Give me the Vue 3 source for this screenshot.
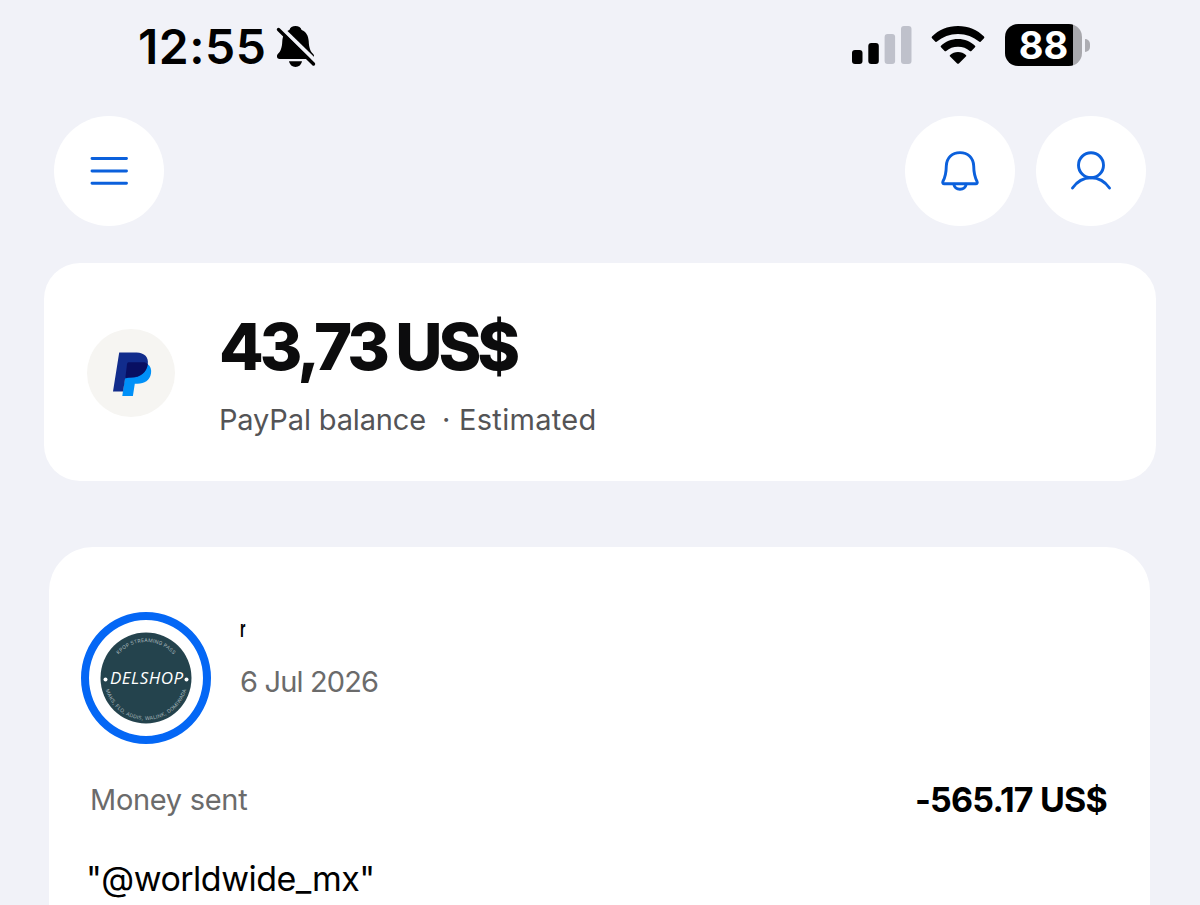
<script setup>
import { ref } from "vue";

const signalBars = [
  { x: 0, height: 14, active: true },
  { x: 16.3, height: 21, active: true },
  { x: 32.6, height: 30, active: false },
  { x: 49, height: 38, active: false },
];

const time = ref("12:55");
const battery = ref(88);

const balance = {
  amount: "43,73 US$",
  label: "PayPal balance",
  note: "Estimated",
};

const payment = {
  name: "r",
  date: "6 Jul 2026",
  type: "Money sent",
  amount: "-565.17 US$",
  message: '"@worldwide_mx"',
};
</script>

<template>
  <div class="screen">
    <div class="status-bar">
      <div class="status-left">
        <span class="time">{{ time }}</span>
        <svg class="silent" width="42" height="44" viewBox="0 0 42 44">
          <path
            d="M20.5 1C17.5 1 15 2.6 14.4 5C9.5 7 7.7 11 7.3 16C7 23 5.5 26.5 2.8 29C1.2 30.8 2 34 4.6 34H36.4C39 34 39.8 30.8 38.2 29C35.5 26.5 34 23 33.7 16C33.3 11 31.5 7 26.6 5C26 2.6 23.5 1 20.5 1Z"
          />
          <path d="M14 36.3H27C26.3 39.8 23.8 42 20.5 42S14.7 39.8 14 36.3Z" />
          <path class="slash-gap" d="M4.5 1L42 37.5" />
          <path class="slash" d="M3.5 4.5L38.5 39" />
        </svg>
      </div>
      <div class="status-right">
        <svg class="signal" width="60" height="38" viewBox="0 0 60 38">
          <rect
            v-for="bar in signalBars"
            :key="bar.x"
            :x="bar.x"
            :y="38 - bar.height"
            width="10.5"
            :height="bar.height"
            rx="3"
            :fill="bar.active ? '#000' : '#bfc1cb'"
          />
        </svg>
        <svg class="wifi" width="54" height="38" viewBox="0 0 54 38">
          <path
            d="M27 0C37.3 0 46.5 4 53 10.5Q53.8 11.4 53 12.3L49.6 15.7Q48.8 16.4 48 15.6C42.5 10.9 35.2 8 27 8S11.5 10.9 6 15.6Q5.2 16.4 4.4 15.7L1 12.3Q.2 11.4 1 10.5C7.5 4 16.7 0 27 0Z"
          />
          <path
            d="M27 13C33.7 13 39.7 15.6 44 19.7Q44.8 20.5 44 21.3L40.4 24.9Q39.6 25.6 38.8 24.9C35.7 22.3 31.6 20.7 27 20.7S18.3 22.3 15.2 24.9Q14.4 25.6 13.6 24.9L10 21.3Q9.2 20.5 10 19.7C14.3 15.6 20.3 13 27 13Z"
          />
          <path
            d="M27 26C30 26 32.8 27.1 34.9 29Q35.7 29.8 34.9 30.6L27.9 37.4Q27 38.2 26.1 37.4L19.1 30.6Q18.3 29.8 19.1 29C21.2 27.1 24 26 27 26Z"
          />
        </svg>
        <div class="battery">
          <div class="battery-body">
            <span>{{ battery }}</span>
          </div>
          <div class="battery-tip"></div>
        </div>
      </div>
    </div>

    <div class="toolbar">
      <button class="round-button" aria-label="Menu">
        <svg width="44" height="44" viewBox="0 0 44 44">
          <path d="M5 9.5H39.5M5 22H39.5M5 34.2H39.5" />
        </svg>
      </button>
      <div class="toolbar-right">
        <button class="round-button" aria-label="Notifications">
          <svg width="44" height="44" viewBox="0 0 44 44">
            <path
              d="M22 3.6C14 3.6 8.6 9 8.3 17C8.2 24.5 7 28.5 5 32.3C4.3 33.7 4.9 34.8 6.3 34.8H37.7C39.1 34.8 39.7 33.7 39 32.3C37 28.5 35.8 24.5 35.7 17C35.4 9 30 3.6 22 3.6Z"
            />
            <path d="M15.8 35.3C16.5 38.7 18.9 40.3 22 40.3S27.5 38.7 28.2 35.3" />
          </svg>
        </button>
        <button class="round-button" aria-label="Profile">
          <svg width="44" height="44" viewBox="0 0 44 44">
            <circle cx="22" cy="16.2" r="12.5" />
            <path d="M3.5 39C8 32.5 14.5 28.7 22 28.7S36 32.5 40.5 39" />
          </svg>
        </button>
      </div>
    </div>

    <div class="card balance-card">
      <div class="paypal-logo">
        <svg width="42" height="48" viewBox="0 0 42 48">
          <path
            fill="#0090f8"
            d="M35.5 13C38.5 15.2 39.7 18.5 39 22.5C37.8 29.5 32.5 32.7 25.5 32.7H22.8L20.9 45H10.3L14.5 15Z"
          />
          <path
            fill="#112c8c"
            d="M7.2 1.500H24.500C32.500 1.500 36.900 6.500 35.800 13C34.600 21.500 28.500 26.700 19 26.700H13.200L11 40.500H1Z"
          />
          <path
            fill="#080f62"
            d="M16.5 11.2H32.5Q34.6 11.6 35.7 13.2C34.5 21.5 28.5 26.2 19.5 26.2Q16.5 26.2 13.3 27.5L15 13Q15.2 11.2 16.5 11.2Z"
          />
        </svg>
      </div>
      <div class="balance-content">
        <h1>{{ balance.amount }}</h1>
        <p>
          <span class="balance-label">{{ balance.label }}</span>
          <span class="dot">·</span>
          <span class="balance-note">{{ balance.note }}</span>
        </p>
      </div>
    </div>

    <div class="card payment-card">
      <div class="payment-header">
        <div class="avatar">
          <svg width="92" height="92" viewBox="0 0 92 92">
            <defs>
              <path id="arc-top" d="M10 46A36 36 0 0 1 82 46" />
              <path id="arc-bottom" d="M4 46A42 42 0 0 0 88 46" />
            </defs>
            <circle cx="46" cy="46" r="45.5" fill="#24434d" />
            <text class="ring-text" text-anchor="middle">
              <textPath href="#arc-top" startOffset="50%" textLength="62">
                KPOP STREAMING PASS
              </textPath>
            </text>
            <text class="ring-text" text-anchor="middle">
              <textPath href="#arc-bottom" startOffset="50%" textLength="108">
                MAKS, FLO, ADDIS, WALINK, DOMIWADA
              </textPath>
            </text>
            <text class="shop-name" x="10" y="52" textLength="73">DELSHOP</text>
            <circle cx="5.5" cy="47.5" r="2" fill="#fff" />
            <circle cx="86.5" cy="47.5" r="2" fill="#fff" />
          </svg>
        </div>
        <div class="payment-who">
          <span class="name">{{ payment.name }}</span>
          <span class="date">{{ payment.date }}</span>
        </div>
      </div>
      <div class="payment-row">
        <span class="type">{{ payment.type }}</span>
        <span class="amount">{{ payment.amount }}</span>
      </div>
      <p class="message">{{ payment.message }}</p>
    </div>
  </div>
</template>

<style>
body {
  margin: 0;
  background-color: #f1f2f8;
}
</style>

<style scoped>
.screen {
  box-sizing: border-box;
  width: 1200px;
  height: 905px;
  overflow: hidden;
  display: flex;
  flex-direction: column;
  background-color: #f1f2f8;
  font-family: Inter, "Liberation Sans", sans-serif;
  color: #000;
}
.status-bar {
  display: flex;
  justify-content: space-between;
  box-sizing: border-box;
  height: 116px;
  padding: 17px 110px 0 138px;
}
.status-left {
  display: flex;
  align-items: flex-start;
  height: 60px;
}
.time {
  width: 137px;
  font-size: 48px;
  font-weight: 600;
  line-height: 60px;
  letter-spacing: 0.5px;
  white-space: nowrap;
}
.silent {
  margin-top: 8px;
}
.slash-gap {
  stroke: #f1f2f8;
  stroke-width: 4;
}
.slash {
  stroke: #000;
  stroke-width: 3.4;
  stroke-linecap: round;
}
.status-right {
  display: flex;
  align-items: flex-start;
}
.signal {
  margin-top: 9px;
}
.wifi {
  margin: 9px 20px 0 19px;
}
.battery {
  display: flex;
  align-items: center;
  gap: 3px;
  margin-top: 7px;
}
.battery-body {
  width: 77px;
  height: 42px;
  border-radius: 13px;
  background: linear-gradient(to right, #000 88%, #a8a8ad 88%);
  color: #fff;
  text-align: center;
}
.battery-body span {
  font-size: 38px;
  font-weight: 700;
  line-height: 42px;
}
.battery-tip {
  width: 5px;
  height: 13px;
  border-radius: 0 6px 6px 0;
  background-color: #adadb3;
}
.toolbar {
  display: flex;
  justify-content: space-between;
  padding: 0 54px;
  height: 147px;
}
.toolbar-right {
  display: flex;
  gap: 21px;
}
.round-button {
  display: flex;
  align-items: center;
  justify-content: center;
  width: 110px;
  height: 110px;
  padding: 0;
  border: none;
  border-radius: 50%;
  background-color: #fff;
}
.round-button svg {
  fill: none;
  stroke: #0b60dc;
  stroke-width: 2.9;
  stroke-linecap: round;
  stroke-linejoin: round;
}
.card {
  box-sizing: border-box;
  background-color: #fff;
}
.balance-card {
  display: flex;
  flex-shrink: 0;
  height: 218px;
  margin: 0 44px;
  padding: 0 43px;
  border-radius: 36px;
}
.paypal-logo {
  display: flex;
  align-items: center;
  justify-content: center;
  box-sizing: border-box;
  width: 88px;
  height: 88px;
  margin-top: 66px;
  padding: 3px 0 0 3px;
  border-radius: 50%;
  background-color: #f6f5f2;
}
.balance-content {
  margin: 44px 0 0 44px;
}
.balance-content h1 {
  margin: 0;
  font-size: 65px;
  font-weight: 800;
  line-height: 80px;
  letter-spacing: -4px;
  word-spacing: -1px;
  white-space: nowrap;
  color: #0c0c0d;
}
.balance-content p {
  display: flex;
  margin: 14px 0 0;
  font-size: 29px;
  line-height: 38px;
  color: #545456;
  white-space: nowrap;
}
.balance-label {
  width: 223px;
  letter-spacing: -0.15px;
}
.dot {
  width: 17px;
}
.balance-note {
  letter-spacing: 0.3px;
}
.payment-card {
  flex: 1;
  margin: 66px 50px 0 49px;
  padding: 65px 43px 0 32px;
  border-radius: 44px 44px 0 0;
}
.payment-header {
  display: flex;
}
.avatar {
  display: flex;
  align-items: center;
  justify-content: center;
  box-sizing: border-box;
  width: 130px;
  height: 132px;
  border: 8px solid #0467f5;
  border-radius: 50%;
}
.shop-name {
  font-family: "Open Sans", sans-serif;
  font-size: 17px;
  font-style: italic;
  font-weight: 500;
  fill: #fff;
}
.ring-text {
  font-size: 5px;
  fill: #a9b8bc;
}
.payment-who {
  display: flex;
  flex-direction: column;
  align-items: flex-start;
  margin-left: 29px;
}
.name {
  height: 26px;
  transform: scaleX(0.6);
  transform-origin: left;
  font-family: "Liberation Sans", sans-serif;
  font-size: 23px;
  font-weight: 700;
  line-height: 26px;
  margin-top: 4px;
}
.date {
  margin-top: 21px;
  font-size: 29px;
  line-height: 38px;
  letter-spacing: -0.85px;
  color: #6b6b6b;
  white-space: nowrap;
}
.payment-row {
  display: flex;
  justify-content: space-between;
  align-items: center;
  height: 44px;
  margin: 33px 0 0 9px;
}
.type {
  font-size: 29px;
  letter-spacing: -0.3px;
  color: #6b6b6b;
}
.amount {
  font-size: 34px;
  font-weight: 700;
  letter-spacing: -0.8px;
}
.message {
  margin: 34px 0 0 5px;
  font-size: 34px;
  line-height: 48px;
  letter-spacing: -0.5px;
}
</style>
